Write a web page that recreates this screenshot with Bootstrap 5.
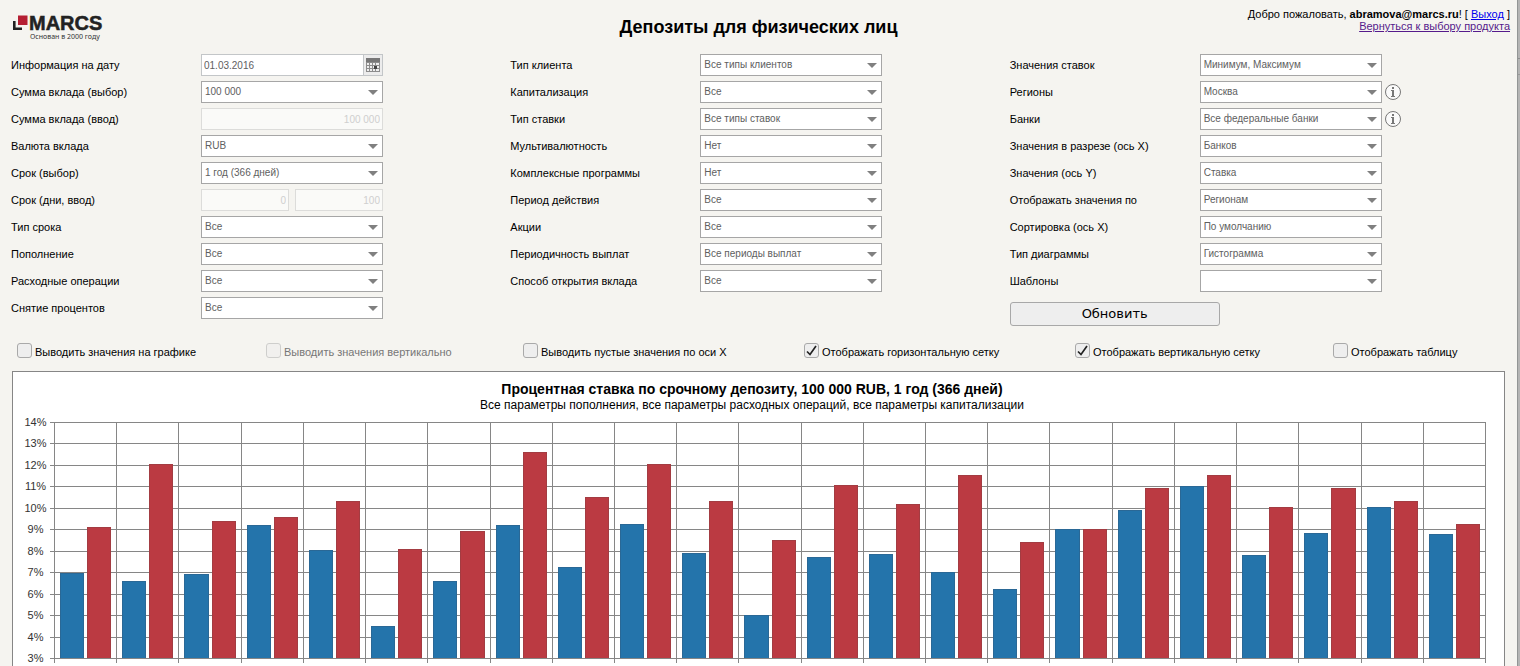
<!DOCTYPE html>
<html lang="ru">
<head>
<meta charset="utf-8">
<meta name="viewport" content="width=device-width, initial-scale=1">
<title>Депозиты для физических лиц</title>
<link rel="stylesheet" href="https://cdn.jsdelivr.net/npm/bootstrap@5.3.0/dist/css/bootstrap.min.css">
<style>
  body { background: #f5f4f0; color: #000; font: 11px/12px "Liberation Sans", Arial, sans-serif; }
  .page-edge { width: 3px; background: #b4b4b4; border-left: 1px solid #929595; padding-top: 58px; }
  .page-edge i { height: 17px; border-top: 1px solid #8f8f8f; border-bottom: 1px solid #999; }
  .top-bar { display: grid; grid-template-columns: 1fr auto 1fr; height: 54px; padding: 8px 7px 0; }
  .top-bar h1 { font-size: 18px; line-height: 22px; font-weight: 700; margin: 8px 0 0; }
  .brand { width: 92px; height: 34px; margin-left: 5px; }
  .link-exit { color: #0000ee; }
  .link-back { color: #551a8b; }
  .filters { padding: 0 8px 0 11px; }
  .field-row { display: grid; grid-template-columns: 190px 182px auto; height: 22px; margin-bottom: 5px; align-items: center; }
  .field-row .form-select, .field-row .form-control {
    height: 22px; min-height: 0; border: 1px solid #a6a6a6; border-radius: 0; font-size: 10px; line-height: 12px;
    color: #606060; background-color: #fff; padding: 3px 2px;
  }
  .field-row .form-select {
    padding: 3px 20px 3px 3px; background-size: 10px 5px; background-position: right 4px center;
    background-image: url("data:image/svg+xml,%3Csvg xmlns='http://www.w3.org/2000/svg' viewBox='0 0 10 5'%3E%3Cpath d='M0 0h10L5 5z' fill='%23808080'/%3E%3C/svg%3E");
  }
  .field-row .form-control:disabled { background: #fafaf8; border-color: #dcdcda; color: #cfcfcf; text-align: right; }
  .field-row .date-text { border-color: #c3c6c8; }
  .date-btn { width: 19px; height: 22px; border: 1px solid #c3c6c8; border-left: 0; background: #ececec; padding: 0; }
  .pair { gap: 6px; }
  .info-btn { width: 16px; height: 16px; margin-left: 3px; border: 0; background: none; padding: 0; }
  .refresh-btn { width: 210px; height: 24px; margin-top: 10px; padding: 0; border: 1px solid #a8a8a8; border-radius: 3px; background: #eee; color: #000; font: 13px/16px "DejaVu Sans", Verdana, sans-serif; }
  .options { display: grid; grid-template-columns: 249fr 257fr 281fr 271fr 258fr 184fr; padding-left: 17px; height: 16px; margin-top: 17px; }
  .options > div { gap: 3px; white-space: nowrap; }
  .options .form-check-input { width: 15px; height: 15px; margin: 0; border: 1px solid #a9a9a9; border-radius: 3px; background-color: #eee; float: none; }
  .options .form-check-input:checked {
    background-size: 13px 13px;
    background-image: url("data:image/svg+xml,%3Csvg xmlns='http://www.w3.org/2000/svg' viewBox='0 0 13 13'%3E%3Cpath d='M2 7.5 5 10.5 11 2' fill='none' stroke='%23222' stroke-width='1.7'/%3E%3C/svg%3E");
  }
  .options label { padding-top: 3px; }
  .options .form-check-input:disabled ~ label { opacity: 1; color: #777; }
  .chart-panel { margin: 12px 12px 0; border: 1px solid #868686; border-bottom: 0; background: #fff; padding: 8px 18px 0 0; }
  .chart-panel h2 { font-size: 14px; line-height: 18px; font-weight: 700; margin: 0; }
  .chart-panel h2, .chart-panel p { padding-left: 5px; }
  .chart-panel p { font-size: 12px; line-height: 14px; margin: 0; }
  .axis-y { width: 45px; height: 256px; margin-right: -8px; color: #333; line-height: 20px; }
  .plot { display: grid; margin-top: 10px; height: 241px; }
  .plot > div { grid-area: 1 / 1; }
  .grid-rows { height: 237px; }
  .grid-rows i { height: 1px; background: #868686; }
  .grid-cols { display: grid; grid-template-columns: repeat(23, 1fr); margin-left: 4px; border-right: 1px solid #868686; }
  .bank { border-left: 1px solid #868686; padding: 0 5px 5px; }
  .bars { gap: 3px; }
  .bar { flex: 1 1 0; border: 1px solid; border-bottom: 0; }
  .bar-min { background: #2474ab; border-color: #2a6896; }
  .bar-max { background: #bb3a42; border-color: #a33c42; }
</style>
</head>
<body>
<div class="d-flex vh-100 overflow-hidden">
<main class="flex-grow-1 d-flex flex-column">
  <header class="top-bar flex-shrink-0">
    <svg class="brand" viewBox="0 0 92 34" role="img" aria-label="MARCS">
      <path d="M1 13h2.600v6.500H10V22H1z" fill="#222"/>
      <path d="M6 7.500h9.500V17H6z" fill="#b51f33"/>
      <text x="17" y="22" font-family="Liberation Sans, Arial, sans-serif" font-weight="700" font-size="20" fill="#222" stroke="#222" stroke-width=".5">MARCS</text>
      <text x="18" y="31" font-family="Noto Sans, sans-serif" font-size="7" fill="#333">Основан в 2000 году</text>
    </svg>
    <h1>Депозиты для физических лиц</h1>
    <div class="text-end">
      <div>Добро пожаловать, <b>abramova@marcs.ru</b>! [ <a class="link-exit" href="#">Выход</a> ]</div>
      <a class="link-back" href="#">Вернуться к выбору продукта</a>
    </div>
  </header>

  <form class="filters flex-shrink-0">
    <div class="row g-0">
      <div class="col-4">
        <div class="field-row"><label for="date">Информация на дату</label>
          <div class="d-flex"><input id="date" class="form-control date-text" value="01.03.2016"><button type="button" class="date-btn flex-shrink-0 d-flex align-items-center justify-content-center" aria-label="Календарь">
            <svg width="14" height="14" viewBox="0 0 14 14"><path d="M0 0h14v14H0z" fill="#8c8c8c"/><path d="M0 0h14v4H0z" fill="#777"/><path d="M1 5h2v2H1zM4 5h2v2H4zM7 5h2v2H7zM10 5h3v2h-3zM1 8h2v2H1zM4 8h2v2H4zM7 8h1v2H7zM11 8h2v2h-2zM1 11h2v2H1zM4 11h2v2H4zM7 11h2v2H7zM10 11h3v2h-3z" fill="#eee"/><path d="M8 8h3v3H8z" fill="#444"/></svg></button></div></div>
        <div class="field-row"><label for="sum">Сумма вклада (выбор)</label><select id="sum" class="form-select"><option>100 000</option></select></div>
        <div class="field-row"><label for="sumIn">Сумма вклада (ввод)</label><input id="sumIn" class="form-control" value="100 000" disabled></div>
        <div class="field-row"><label for="cur">Валюта вклада</label><select id="cur" class="form-select"><option>RUB</option></select></div>
        <div class="field-row"><label for="term">Срок (выбор)</label><select id="term" class="form-select"><option>1 год (366 дней)</option></select></div>
        <div class="field-row"><label for="days">Срок (дни, ввод)</label><div class="d-flex pair"><input id="days" class="form-control" value="0" disabled><input class="form-control" value="100" aria-label="Срок до, дней" disabled></div></div>
        <div class="field-row"><label for="termType">Тип срока</label><select id="termType" class="form-select"><option>Все</option></select></div>
        <div class="field-row"><label for="refill">Пополнение</label><select id="refill" class="form-select"><option>Все</option></select></div>
        <div class="field-row"><label for="spend">Расходные операции</label><select id="spend" class="form-select"><option>Все</option></select></div>
        <div class="field-row"><label for="interest">Снятие процентов</label><select id="interest" class="form-select"><option>Все</option></select></div>
      </div>
      <div class="col-4">
        <div class="field-row"><label for="client">Тип клиента</label><select id="client" class="form-select"><option>Все типы клиентов</option></select></div>
        <div class="field-row"><label for="capital">Капитализация</label><select id="capital" class="form-select"><option>Все</option></select></div>
        <div class="field-row"><label for="rateType">Тип ставки</label><select id="rateType" class="form-select"><option>Все типы ставок</option></select></div>
        <div class="field-row"><label for="multi">Мультивалютность</label><select id="multi" class="form-select"><option>Нет</option></select></div>
        <div class="field-row"><label for="complex">Комплексные программы</label><select id="complex" class="form-select"><option>Нет</option></select></div>
        <div class="field-row"><label for="period">Период действия</label><select id="period" class="form-select"><option>Все</option></select></div>
        <div class="field-row"><label for="promo">Акции</label><select id="promo" class="form-select"><option>Все</option></select></div>
        <div class="field-row"><label for="payout">Периодичность выплат</label><select id="payout" class="form-select"><option>Все периоды выплат</option></select></div>
        <div class="field-row"><label for="opening">Способ открытия вклада</label><select id="opening" class="form-select"><option>Все</option></select></div>
      </div>
      <div class="col-4">
        <div class="field-row"><label for="rates">Значения ставок</label><select id="rates" class="form-select"><option>Минимум, Максимум</option></select></div>
        <div class="field-row"><label for="regions">Регионы</label><select id="regions" class="form-select"><option>Москва</option></select>
          <button type="button" class="info-btn d-flex" aria-label="О регионах"><svg width="16" height="16" viewBox="0 0 16 16"><circle cx="8" cy="8" r="7.500" fill="#fafafa" stroke="#777"/><path d="M7 3h2v2H7zM6 6h3v6h1v1H6v-1h1V7H6z" fill="#777"/></svg></button></div>
        <div class="field-row"><label for="banks">Банки</label><select id="banks" class="form-select"><option>Все федеральные банки</option></select>
          <button type="button" class="info-btn d-flex" aria-label="О банках"><svg width="16" height="16" viewBox="0 0 16 16"><circle cx="8" cy="8" r="7.500" fill="#fafafa" stroke="#777"/><path d="M7 3h2v2H7zM6 6h3v6h1v1H6v-1h1V7H6z" fill="#777"/></svg></button></div>
        <div class="field-row"><label for="axisX">Значения в разрезе (ось X)</label><select id="axisX" class="form-select"><option>Банков</option></select></div>
        <div class="field-row"><label for="axisY">Значения (ось Y)</label><select id="axisY" class="form-select"><option>Ставка</option></select></div>
        <div class="field-row"><label for="groupBy">Отображать значения по</label><select id="groupBy" class="form-select"><option>Регионам</option></select></div>
        <div class="field-row"><label for="sort">Сортировка (ось X)</label><select id="sort" class="form-select"><option>По умолчанию</option></select></div>
        <div class="field-row"><label for="chartType">Тип диаграммы</label><select id="chartType" class="form-select"><option>Гистограмма</option></select></div>
        <div class="field-row"><label for="tpl">Шаблоны</label><select id="tpl" class="form-select"><option></option></select></div>
        <button type="button" class="btn refresh-btn d-block">Обновить</button>
      </div>
    </div>
  </form>

  <div class="options flex-shrink-0">
    <div class="d-flex"><input id="o1" type="checkbox" class="form-check-input"><label for="o1">Выводить значения на графике</label></div>
    <div class="d-flex"><input id="o2" type="checkbox" class="form-check-input" disabled><label for="o2">Выводить значения вертикально</label></div>
    <div class="d-flex"><input id="o3" type="checkbox" class="form-check-input"><label for="o3">Выводить пустые значения по оси X</label></div>
    <div class="d-flex"><input id="o4" type="checkbox" class="form-check-input" checked><label for="o4">Отображать горизонтальную сетку</label></div>
    <div class="d-flex"><input id="o5" type="checkbox" class="form-check-input" checked><label for="o5">Отображать вертикальную сетку</label></div>
    <div class="d-flex"><input id="o6" type="checkbox" class="form-check-input"><label for="o6">Отображать таблицу</label></div>
  </div>

  <section class="chart-panel flex-grow-1">
    <h2 class="text-center">Процентная ставка по срочному депозиту, 100 000 RUB, 1 год (366 дней)</h2>
    <p class="text-center">Все параметры пополнения, все параметры расходных операций, все параметры капитализации</p>
    <div class="d-flex">
      <div class="axis-y d-flex flex-column justify-content-between text-center flex-shrink-0" id="axis"></div>
      <div class="plot flex-grow-1">
        <div class="grid-rows d-flex flex-column justify-content-between" id="rows"></div>
        <div class="grid-cols" id="cols"></div>
      </div>
    </div>
  </section>
</main>
<aside class="page-edge flex-shrink-0"><i class="d-block"></i></aside>
</div>
<script src="https://cdn.jsdelivr.net/npm/bootstrap@5.3.0/dist/js/bootstrap.bundle.min.js"></script>
<script>
  // Minimum and maximum rate per bank, in percent
  const bankRates = [[6.94,9.1],[6.6,12.05],[6.9,9.4],[9.2,9.55],[8.05,10.3],[4.5,8.1],[6.6,8.93],[9.2,12.6],
    [7.25,10.5],[9.25,12.05],[7.9,10.3],[5,8.5],[7.7,11.08],[7.85,10.2],[7,11.55],[6.2,8.4],[9,9],
    [9.9,10.93],[11,11.55],[7.8,10.05],[8.85,10.93],[10.05,10.33],[8.8,9.25]];
  const low = 3, high = 14;
  const axis = document.getElementById('axis');
  const rows = document.getElementById('rows');
  const cols = document.getElementById('cols');
  for (let v = high; v >= low; v--) {
    axis.insertAdjacentHTML('beforeend', `<span>${v}%</span>`);
    rows.insertAdjacentHTML('beforeend', '<i></i>');
  }
  const h = v => ((v - low) / (high - low) * 100).toFixed(2);
  for (const [min, max] of bankRates) {
    cols.insertAdjacentHTML('beforeend', `<div class="bank"><div class="bars d-flex align-items-end h-100">
      <div class="bar bar-min" style="height:${h(min)}%"></div><div class="bar bar-max" style="height:${h(max)}%"></div></div></div>`);
  }
</script>
</body>
</html>
